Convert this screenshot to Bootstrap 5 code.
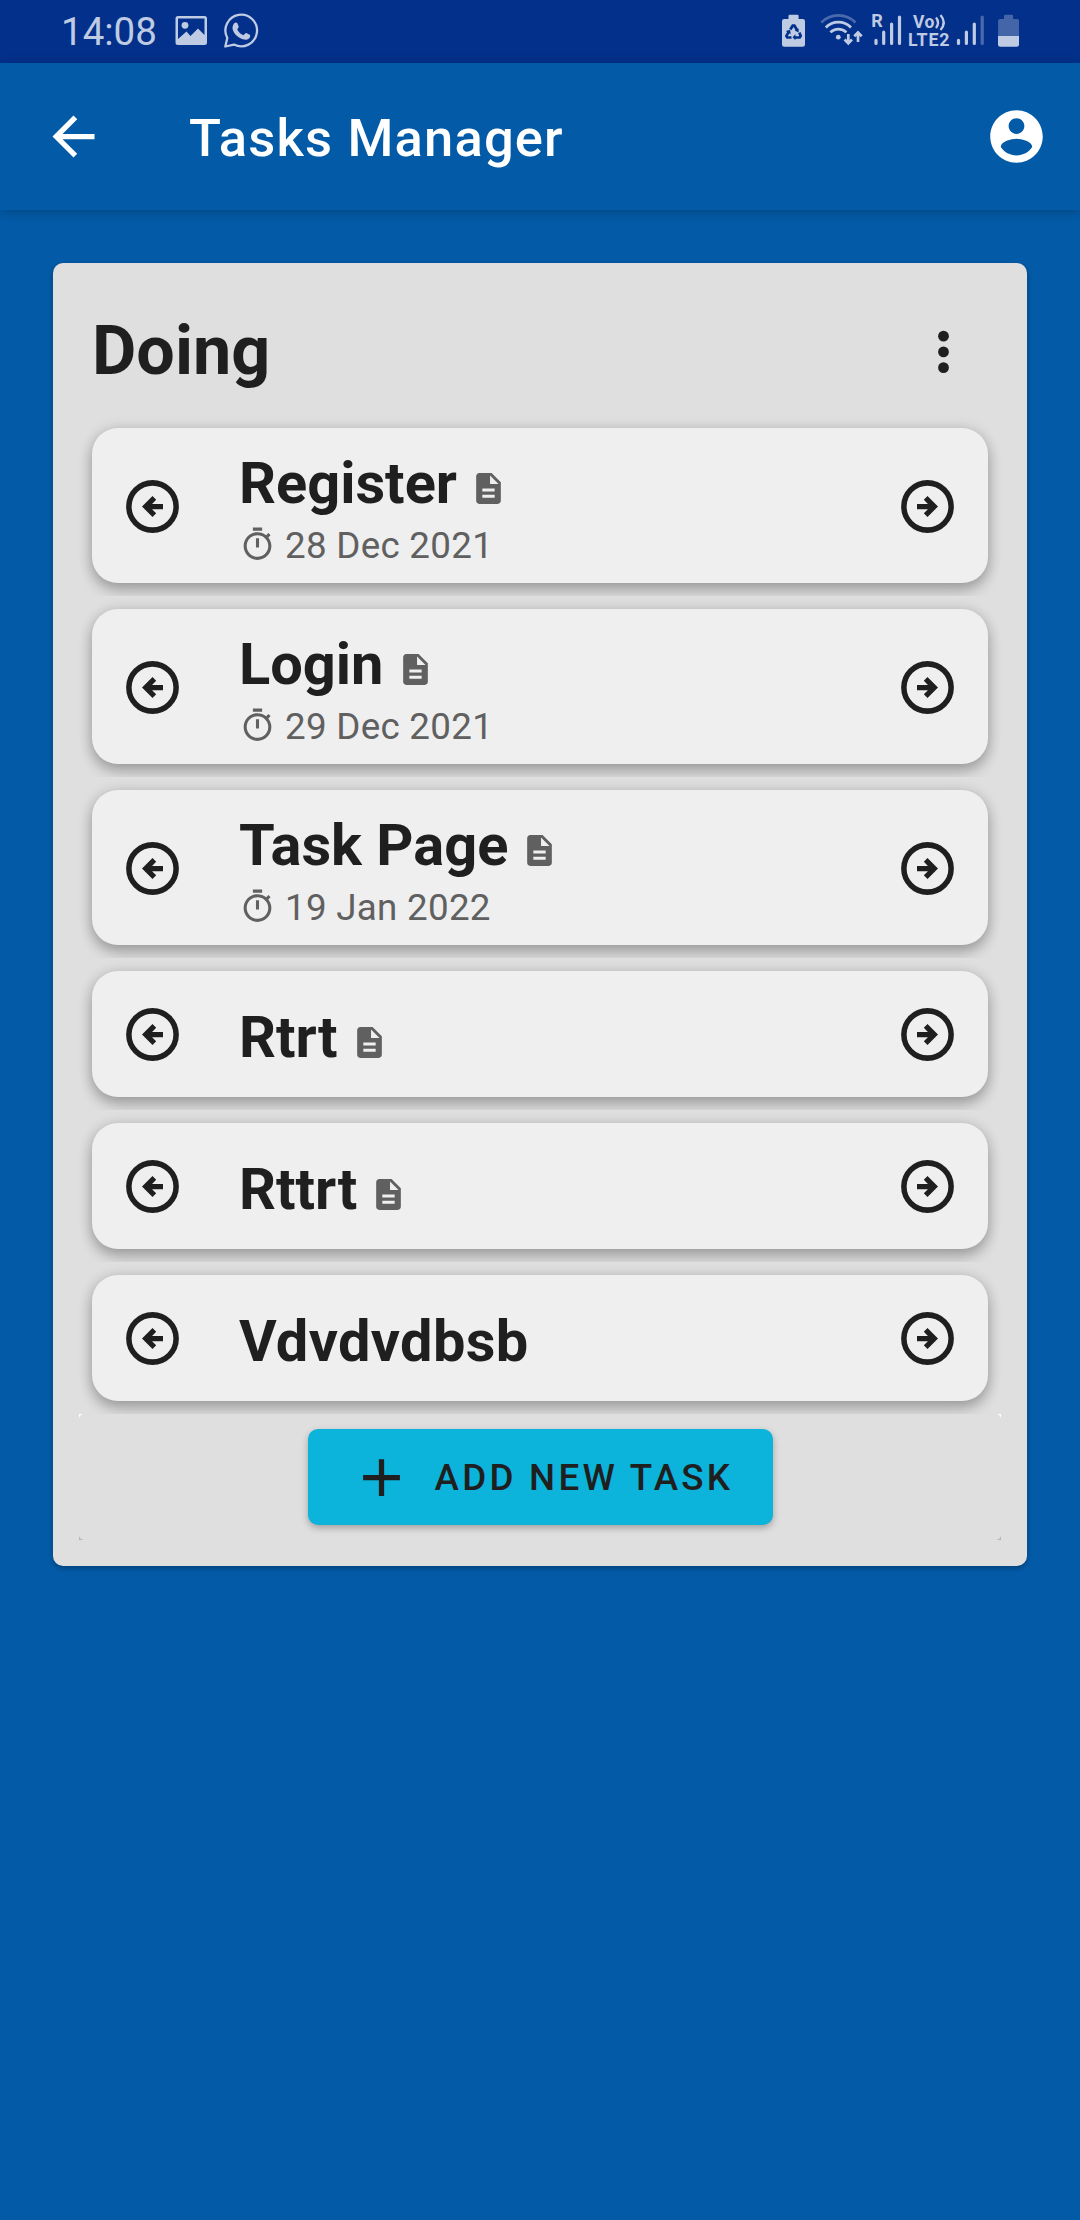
<!DOCTYPE html>
<html lang="en">
<head>
<meta charset="utf-8">
<meta name="viewport" content="width=device-width, initial-scale=1">
<title>Tasks Manager</title>
<link href="https://cdn.jsdelivr.net/npm/bootstrap@5.3.0/dist/css/bootstrap.min.css" rel="stylesheet">
<style>
  body { background: #035aa6; font-family: Roboto, "Noto Sans", sans-serif; color: #1f1f1f; min-height: 2220px; overflow-x: hidden; }
  svg { display: block; flex: none; }
  .status-strip { height: 63px; background: #03308a; color: #bfcae3; padding: 0 61px 0 61px; }
  .clock { font-size: 38.5px; line-height: 64px; width: 114px; white-space: nowrap; }
  .app-header { height: 147px; background: #035aa6; padding: 0 32px 0 42px; box-shadow: 0 2px 10px rgba(0,0,0,.22); }
  .app-title { font-size: 52.5px; font-weight: 500; line-height: 70px; letter-spacing: 1.18px; margin-left: 84px; padding-top: 3px; white-space: nowrap; }
  .ico { width: 63px; height: 63px; fill: currentColor; }
  .board { margin: 53px 53px 0; height: 1303px; padding: 38px 26px 26px; background: #dfdfdf; border-radius: 10px; box-shadow: 0 2px 5px rgba(0,0,0,.3); }
  .board-head { height: 114px; padding: 0 26px 0 13px; }
  .board-title { font-size: 68.25px; font-weight: 700; line-height: 80px; padding-top: 10px; }
  .slot { padding: 13px; overflow: hidden; }
  .task { height: 155px; padding: 0 29px; background: #efefef; border-radius: 26px; box-shadow: 0 8px 14px rgba(0,0,0,.22), 0 1px 14px rgba(0,0,0,.16); }
  .task.brief { height: 126px; }
  .task > .ico { margin-top: 47px; }
  .task.brief > .ico { margin-top: 32px; }
  .info { margin-left: 55px; padding-top: 21px; white-space: nowrap; }
  .brief .info { padding-top: 32px; }
  .name { font-size: 57.75px; font-weight: 700; line-height: 68px; }
  .name.wide { letter-spacing: .35px; }
  .name svg { width: 37px; height: 37px; margin: 21px 0 0 13px; fill: #606060; }
  .due { font-size: 36.75px; line-height: 44px; letter-spacing: .28px; margin-top: 7px; color: #606060; }
  .due svg { width: 37px; height: 37px; margin: 2px 9px 0 0; fill: #606060; }
  .foot-slot { height: 126px; background: linear-gradient(#fff 50%, #b4b4b4 50%); }
  .foot-inner { height: 100%; background: #dfdfdf; border-radius: 5px; }
  .add-task { width: 465px; height: 96px; padding: 0 0 0 42px; border: 0; border-radius: 10px; background: #0cb3da; color: #1f1f1f; font-size: 36.75px; font-weight: 500; letter-spacing: 3.28px; text-transform: uppercase; box-shadow: 0 3px 7px rgba(0,0,0,.28); white-space: nowrap; }
  .add-task:hover { background: #0cb3da; color: #1f1f1f; }
  .add-task span { margin-left: 22px; padding-top: 2px; }
</style>
</head>
<body>
<svg width="0" height="0" class="position-absolute" aria-hidden="true">
  <symbol id="i-left" viewBox="0 0 24 24"><circle cx="12" cy="12" r="9" fill="none" stroke="currentColor" stroke-width="2.1"/><path d="M12 8l-4 4 4 4 1.41-1.41L11.83 13H16v-2h-4.17l1.58-1.59z"/></symbol>
  <symbol id="i-right" viewBox="0 0 24 24"><circle cx="12" cy="12" r="9" fill="none" stroke="currentColor" stroke-width="2.1"/><path d="M12 8l4 4-4 4-1.41-1.41L12.17 13H8v-2h4.17l-1.58-1.59z"/></symbol>
  <symbol id="i-doc" viewBox="0 0 24 24"><path d="M14 2H6c-1.1 0-1.99.9-1.99 2L4 20c0 1.1.89 2 1.99 2H18c1.1 0 2-.9 2-2V8l-6-6zm2 16H8v-2h8v2zm0-4H8v-2h8v2zm-3-5V3.5L18.5 9H13z"/></symbol>
  <symbol id="i-timer" viewBox="0 0 24 24"><path d="M15 1H9v2h6V1zm-4 13h2V8h-2v6zm8.03-6.61l1.42-1.42c-.43-.51-.9-.99-1.41-1.41l-1.42 1.42C16.07 4.74 14.12 4 12 4c-4.97 0-9 4.03-9 9s4.02 9 9 9 9-4.03 9-9c0-2.12-.74-4.07-1.97-5.61zM12 20c-3.87 0-7-3.13-7-7s3.13-7 7-7 7 3.13 7 7-3.13 7-7 7z"/></symbol>
</svg>

<div class="status-strip d-flex align-items-center">
  <div class="clock">14:08</div>
  <svg width="32" height="63" viewBox="175 0 32 63" fill="currentColor"><path fill-rule="evenodd" d="M178 16h26.500q2.500 0 2.500 2.500v24q0 2.500-2.500 2.500H178q-2.500 0-2.500-2.500v-24Q175.500 16 178 16zM178 18.500V39l8.500-7.500 4 4.500 7.500-7.500 6.500 6.500V18.500z"/><circle cx="185" cy="25.300" r="3.400"/></svg>
  <svg width="36" height="63" viewBox="223 0 36 63" class="ms-3" fill="none"><path d="M225.300 46.500l2-8.500A15.800 15.800 0 1 1 234 44.600z" stroke="currentColor" stroke-width="2.300" stroke-linejoin="round"/><path transform="translate(0 .5)" fill="currentColor" d="M234.500 22.500c1-.9 2.300-.8 2.900.3l1.300 3.300c.3.900-1.500 2.500-1.500 3 1.400 2.700 3.400 4.500 6.200 5.700.7 0 2.100-2.400 2.900-2.200l3.400 1.700c.8.500.6 2.100-.2 3.100-1.200 1.500-3.400 2.100-5.400 1.700-5.900-1.400-9.800-5.200-11.400-10.100-.6-2.400.3-5 1.800-6.500z"/></svg>
  <div class="d-flex ms-auto">
    <svg width="38" height="63" viewBox="782 0 38 63" fill="currentColor"><path d="M788.500 19v-3q0-1.300 1.300-1.300h7.500q1.300 0 1.300 1.300v3h4.200q2.200 0 2.200 2.200v23q0 2.500-2.500 2.500h-18q-2.500 0-2.500-2.500v-23q0-2.200 2.200-2.200z"/><g fill="none" stroke="#03308a" stroke-width="2.700"><path d="M790.300 29.500l2.400-3.800h1.700l2.700 4.300"/><path d="M799.300 32.600l1.400 3.200-1 1.700h-5"/><path d="M791.500 37.500h-4.200l-.9-1.600 2.300-4"/></g><path fill="#03308a" d="M798.800 28.500l-.3 4-3.800-2zM795.500 34.300v6l-3-3zM785.800 31l4.200-1.300.8 4.500z"/></svg>
    <svg width="51" height="63" viewBox="820 0 51 63" fill="none" stroke="currentColor" stroke-width="2.700"><path opacity=".38" d="M821.300 22.500a24 24 0 0 1 34.200 0"/><path d="M825.800 27.500a17.600 17.600 0 0 1 25.200 0"/><path d="M830.400 32.400a11.200 11.200 0 0 1 16 0"/><circle cx="838.300" cy="37.200" r="2.400" fill="currentColor" stroke="none"/><path d="M848.300 34v9.500M844.600 39.500l3.700 3.800 3.700-3.800M858 42v-9.500M854.300 36.300l3.700-3.800 3.700 3.800"/></svg>
    <svg width="37" height="63" viewBox="871 0 37 63" fill="currentColor"><text x="871.300" y="27" font-size="18" font-weight="700" font-family="Roboto, sans-serif">R</text><g stroke="currentColor" stroke-width="3.200" stroke-linecap="round"><path d="M876 40.300v3.200M883.700 32.200v11.300M891.600 24v19.500M899.500 17v26.500"/></g></svg>
    <svg width="48" height="63" viewBox="908 0 48 63" fill="currentColor" font-family="Roboto, sans-serif" font-weight="700"><text x="913" y="28" font-size="17.500" textLength="21.500">Vo</text><text x="908" y="45.800" font-size="17.800" textLength="41.500" lengthAdjust="spacing">LTE2</text><path fill="none" stroke="currentColor" stroke-width="2.300" d="M936 17.500q4 5 0 10.500M940.500 15q6.500 7.500 0 15"/></svg>
    <svg width="42" height="63" viewBox="956 0 42 63" stroke="currentColor" stroke-width="3.200" stroke-linecap="round"><path d="M958.500 40.300v3.200M966.400 32.200v11.300M974.300 24v19.500"/><path opacity=".38" d="M982.200 17v26.500"/></svg>
    <svg width="21" height="63" viewBox="998 0 21 63" fill="currentColor"><path opacity=".35" d="M1004 19v-3q0-1.300 1.300-1.300h6.500q1.300 0 1.300 1.300v3h4q2 0 2 2v15h-21V21q0-2 2-2z"/><path d="M998 36h21v8.200q0 2.500-2.500 2.500h-16q-2.500 0-2.500-2.500z"/></svg>
  </div>
</div>

<header class="app-header d-flex align-items-center text-white">
  <svg class="ico" viewBox="0 0 24 24"><path d="M20 11H7.830l5.590-5.590L12 4l-8 8 8 8 1.410-1.410L7.830 13H20v-2z"/></svg>
  <h1 class="app-title mb-0">Tasks Manager</h1>
  <svg class="ico ms-auto" viewBox="0 0 24 24"><path d="M12 2C6.480 2 2 6.480 2 12s4.480 10 10 10 10-4.480 10-10S17.520 2 12 2zm0 3c1.660 0 3 1.340 3 3s-1.340 3-3 3-3-1.340-3-3 1.340-3 3-3zm0 14.200c-2.500 0-4.710-1.280-6-3.220.03-1.990 4-3.080 6-3.080 1.990 0 5.970 1.090 6 3.080-1.290 1.940-3.500 3.220-6 3.220z"/></svg>
</header>

<main class="board">
  <div class="board-head d-flex align-items-start justify-content-between">
    <h2 class="board-title mb-0">Doing</h2>
    <svg class="ico mt-3" viewBox="0 0 24 24"><circle cx="12" cy="7.300" r="2.050"/><circle cx="12" cy="13.300" r="2.050"/><circle cx="12" cy="19.300" r="2.050"/></svg>
  </div>

  <div class="slot"><div class="task d-flex align-items-start">
    <svg class="ico"><use href="#i-left"/></svg>
    <div class="info">
      <div class="name d-flex">Register<svg><use href="#i-doc"/></svg></div>
      <div class="due d-flex"><svg><use href="#i-timer"/></svg>28 Dec 2021</div>
    </div>
    <svg class="ico ms-auto"><use href="#i-right"/></svg>
  </div></div>

  <div class="slot"><div class="task d-flex align-items-start">
    <svg class="ico"><use href="#i-left"/></svg>
    <div class="info">
      <div class="name d-flex">Login<svg><use href="#i-doc"/></svg></div>
      <div class="due d-flex"><svg><use href="#i-timer"/></svg>29 Dec 2021</div>
    </div>
    <svg class="ico ms-auto"><use href="#i-right"/></svg>
  </div></div>

  <div class="slot"><div class="task d-flex align-items-start">
    <svg class="ico"><use href="#i-left"/></svg>
    <div class="info">
      <div class="name d-flex">Task Page<svg><use href="#i-doc"/></svg></div>
      <div class="due d-flex"><svg><use href="#i-timer"/></svg>19 Jan 2022</div>
    </div>
    <svg class="ico ms-auto"><use href="#i-right"/></svg>
  </div></div>

  <div class="slot"><div class="task brief d-flex align-items-start">
    <svg class="ico"><use href="#i-left"/></svg>
    <div class="info"><div class="name d-flex">Rtrt<svg><use href="#i-doc"/></svg></div></div>
    <svg class="ico ms-auto"><use href="#i-right"/></svg>
  </div></div>

  <div class="slot"><div class="task brief d-flex align-items-start">
    <svg class="ico"><use href="#i-left"/></svg>
    <div class="info"><div class="name d-flex">Rttrt<svg><use href="#i-doc"/></svg></div></div>
    <svg class="ico ms-auto"><use href="#i-right"/></svg>
  </div></div>

  <div class="slot"><div class="task brief d-flex align-items-start">
    <svg class="ico"><use href="#i-left"/></svg>
    <div class="info"><div class="name wide d-flex">Vdvdvdbsb</div></div>
    <svg class="ico ms-auto"><use href="#i-right"/></svg>
  </div></div>

  <div class="foot-slot"><div class="foot-inner d-flex align-items-center justify-content-center">
    <button type="button" class="btn add-task d-flex align-items-center">
      <svg class="ico" viewBox="0 0 24 24"><path d="M19 13h-6v6h-2v-6H5v-2h6V5h2v6h6v2z"/></svg>
      <span>Add new task</span>
    </button>
  </div></div>
</main>
<script src="https://cdn.jsdelivr.net/npm/bootstrap@5.3.0/dist/js/bootstrap.bundle.min.js"></script>
</body>
</html>
